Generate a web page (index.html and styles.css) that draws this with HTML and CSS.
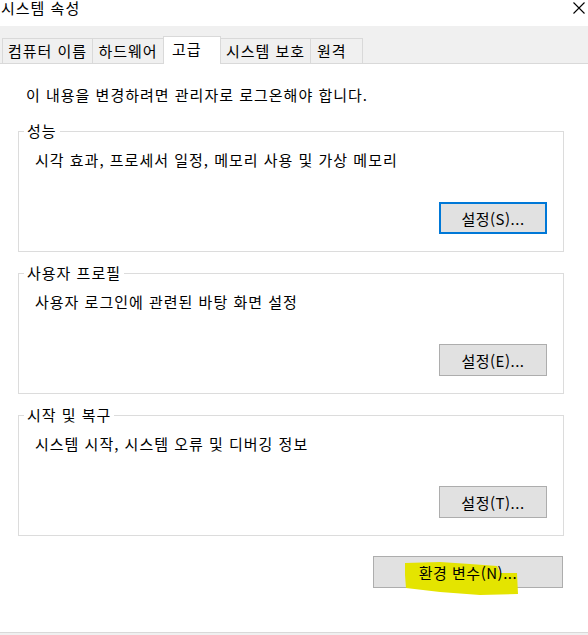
FILE: index.html
```html
<!DOCTYPE html>
<html lang="ko">
<head>
    <meta charset="UTF-8">
    <title>시스템 속성</title>
    <link rel="stylesheet" href="styles.css">
</head>
<body>

<div class="titlebar">
    <span class="title">시스템 속성</span>
    <svg class="close" width="12" height="12" viewBox="0 0 12 12">
        <path d="M0.5 0.5 L11.5 11.5 M11.5 0.5 L0.5 11.5" stroke="#000" stroke-width="1.1" fill="none"/>
    </svg>
</div>

<div class="tabstrip">
    <div class="tab tab-name">컴퓨터 이름</div>
    <div class="tab tab-hw">하드웨어</div>
    <div class="tab tab-adv active">고급</div>
    <div class="tab tab-prot">시스템 보호</div>
    <div class="tab tab-remote">원격</div>
</div>

<div class="panel">
    <p class="notice">이 내용을 변경하려면 관리자로 로그온해야 합니다.</p>

    <fieldset class="group">
        <legend>성능</legend>
        <p class="group-text">시각 효과, 프로세서 일정, 메모리 사용 및 가상 메모리</p>
        <div class="group-actions">
            <button class="btn btn-focus">설정(S)...</button>
        </div>
    </fieldset>

    <fieldset class="group">
        <legend>사용자 프로필</legend>
        <p class="group-text">사용자 로그인에 관련된 바탕 화면 설정</p>
        <div class="group-actions">
            <button class="btn">설정(E)...</button>
        </div>
    </fieldset>

    <fieldset class="group">
        <legend>시작 및 복구</legend>
        <p class="group-text">시스템 시작, 시스템 오류 및 디버깅 정보</p>
        <div class="group-actions">
            <button class="btn">설정(T)...</button>
        </div>
    </fieldset>

    <div class="env-row">
        <button class="btn btn-env">
            <!-- marker scribble over the label -->
            <svg class="marker" width="190" height="45" viewBox="0 0 190 45">
                <polygon points="32,7 67,6 97,8 124,10 127,17 144,17 145,38 107,39 67,36 33,32 32,19" fill="#e4e400"/>
            </svg>
            <span class="btn-label">환경 변수(N)...</span>
        </button>
    </div>
</div>

</body>
</html>
```

FILE: styles.css
```css
body {
    margin: 0;
    padding: 0;
    width: 588px;
    height: 635px;
    overflow: hidden;
    background: #f0f0f0;
    font-family: "Noto Sans CJK KR", "Noto Sans", sans-serif;
    font-size: 15px;
    letter-spacing: 1px;
    color: #000;
}

.titlebar {
    height: 26px;
    background: #fff;
    display: flex;
    justify-content: space-between;
    align-items: flex-start;
}
.title {
    line-height: 16px;
    padding-left: 1px;
}
.close {
    margin: 2px 3px 0 0;
}

.tabstrip {
    height: 37px;
    display: flex;
    align-items: flex-end;
    padding-left: 2px;
    background: #f0f0f0;
}
.tab {
    height: 25px;
    box-sizing: border-box;
    border: 1px solid #d9d9d9;
    border-bottom: none;
    line-height: 24px;
    text-align: center;
    background: #f0f0f0;
    white-space: nowrap;
}
.tab + .tab {
    margin-left: -1px;
}
.tab.active {
    position: relative;
    height: 28px;
    margin-bottom: -1px;
    padding-bottom: 3px;
    background: #fff;
}
.tab-name { width: 91px; }
.tab-hw { width: 72px; }
.tab-adv { width: 58px; text-align: left; padding-left: 8px; }
.tab-prot { width: 91px; }
.tab-remote { width: 53px; text-align: left; padding-left: 6px; }

.panel {
    height: 570px;
    box-sizing: border-box;
    background: #fff;
    border-top: 1px solid #d9d9d9;
    border-bottom: 1px solid #d9d9d9;
    padding: 0 24px 0 18px;
}

.notice {
    margin: 21px 0 0 8px;
    line-height: 20px;
}

.group {
    margin: 11px 0 0;
    padding: 9px 16px 17px;
    border: 1px solid #dcdcdc;
    min-width: 0;
}
.notice + .group {
    margin-top: 16px;
}
.group legend {
    margin-left: -11px;
    padding: 0 3px;
    line-height: 20px;
}
.group-text {
    margin: 0;
    line-height: 20px;
}
.group-actions {
    display: flex;
    justify-content: flex-end;
    margin-top: 32px;
}

.btn {
    height: 32px;
    width: 108px;
    box-sizing: border-box;
    background: #e1e1e1;
    border: 1px solid #adadad;
    font-family: inherit;
    font-size: 15px;
    letter-spacing: 0.5px;
    color: #000;
    padding: 0;
}
.btn-focus {
    border: 2px solid #0078d7;
}

.env-row {
    display: flex;
    justify-content: flex-end;
    margin-top: 20px;
    margin-right: 1px;
}
.btn-env {
    position: relative;
    width: 190px;
}
.marker {
    position: absolute;
    left: -1px;
    top: -1px;
    overflow: visible;
}
.btn-label {
    position: relative;
}
```
